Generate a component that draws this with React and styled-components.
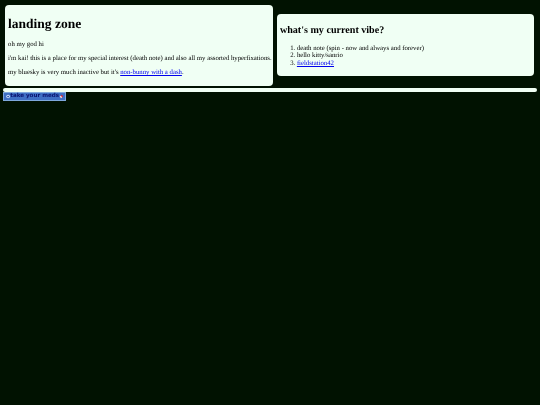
import React from 'react'
import styled, { createGlobalStyle } from 'styled-components'

const GlobalStyle = createGlobalStyle`
  html, body {
    margin: 0;
    background: #011201;
  }
  body {
    font-family: "Liberation Serif", "Times New Roman", serif;
    font-size: 6.75px;
    line-height: 7.6px;
    color: #000;
    text-rendering: geometricPrecision;
  }
`

// the reference is a downscaled capture, so everything is a little soft
const Page = styled.div`
  min-height: 405px;
  padding: 0 3px;
  background: #011201;
  filter: blur(0.3px);
`

const Columns = styled.div`
  display: flex;
  align-items: center;
  gap: 4px;
  padding: 5px 3px 2px 2px;
`

const Card = styled.section`
  flex: ${(p) => p.$grow};
  min-width: 0;
  background: #f0fff4;
  border-radius: 4px;
  padding: 2px 3px;
`

const Title = styled.h1`
  margin: 9px 0;
  font-size: 13.5px;
  line-height: 15.5px;
  font-weight: bold;
`

const Subtitle = styled.h2`
  margin: 8.4px 0;
  font-size: 10.1px;
  line-height: 11.6px;
  font-weight: bold;
`

const Text = styled.p`
  margin: 6.75px 0;
  white-space: nowrap;
`

const List = styled.ol`
  margin: 6.75px 0;
  padding-left: 17px;
`

const Anchor = styled.a`
  color: #0000ee;
  text-decoration: underline;
`

const Rule = styled.hr`
  height: 4px;
  margin: 0;
  border: 0;
  border-radius: 2px;
  background: #f0fff4;
`

const Stamp = styled.a`
  display: flex;
  align-items: center;
  justify-content: space-between;
  box-sizing: border-box;
  width: 63px;
  height: 9px;
  padding: 0 1px 0 2px;
  border: 1px solid #7fa8dc;
  background: #3f6fc4;
  text-decoration: none;
`

const StampText = styled.span`
  font-family: "DejaVu Sans", sans-serif;
  font-size: 5.6px;
  line-height: 7px;
  font-weight: bold;
  color: #0a1470;
  white-space: nowrap;
`

const Pill = () => (
  <svg width="7" height="7" viewBox="0 0 7 7">
    <path d="M1 4 L4 1 L6 3 L3 6 Z" fill="#e02030" />
    <path d="M1 4 L2.5 2.5 L4.5 4.5 L3 6 Z" fill="#f4f4f4" />
  </svg>
)

const Bubble = () => (
  <svg width="6" height="7" viewBox="0 0 6 7">
    <circle cx="3" cy="3.5" r="2.6" fill="#cfe4ff" />
    <circle cx="3" cy="3.5" r="1.2" fill="#1c3fa0" />
  </svg>
)

export default function App() {
  return (
    <Page>
      <GlobalStyle />
      <Columns>
        <Card $grow="268">
          <Title>landing zone</Title>
          <Text>oh my god hi</Text>
          <Text>i'm kai! this is a place for my special interest (death note) and also all my assorted hyperfixations.</Text>
          <Text>
            my bluesky is very much inactive but it's <Anchor href="#">non-bunny with a dash</Anchor>.
          </Text>
        </Card>
        <Card $grow="257">
          <Subtitle>what's my current vibe?</Subtitle>
          <List>
            <li>death note (spin - now and always and forever)</li>
            <li>hello kitty/sanrio</li>
            <li>
              <Anchor href="#">fieldstation42</Anchor>
            </li>
          </List>
        </Card>
      </Columns>
      <Rule />
      <Stamp href="#">
        <Bubble />
        <StampText>take your meds</StampText>
        <Pill />
      </Stamp>
    </Page>
  )
}
